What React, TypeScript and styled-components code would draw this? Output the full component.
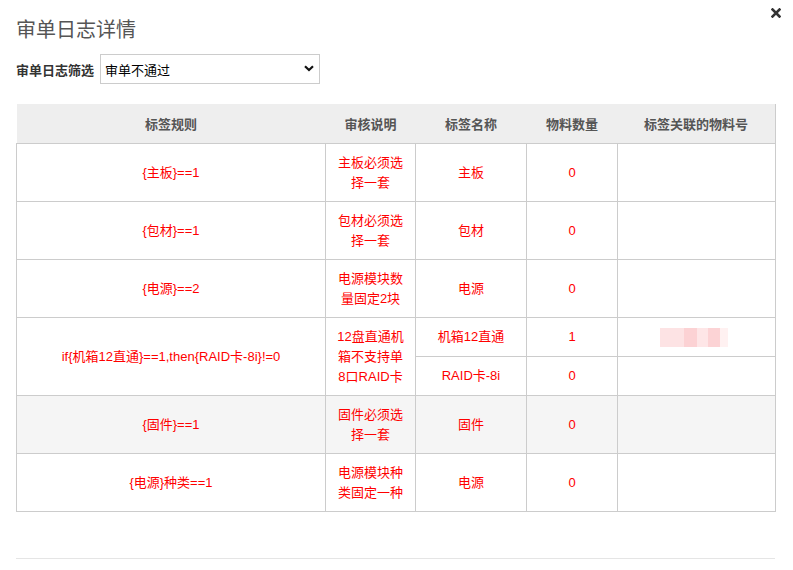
import React, { FC } from 'react';
import styled, { createGlobalStyle } from 'styled-components';

const GlobalStyle = createGlobalStyle`
  html, body {
    margin: 0;
    padding: 0;
    background: #fff;
  }
  body {
    font-family: "Liberation Sans", Arial, "Noto Sans CJK SC", sans-serif;
    font-size: 13px;
    color: #333;
  }
`;

const StyledModal = styled.div`
  position: relative;
  width: 793px;
  height: 570px;
  box-sizing: border-box;
  padding: 14px 18px 0 16px;
`;

const StyledTitle = styled.h3`
  margin: 0;
  font-size: 20px;
  font-weight: 400;
  line-height: 30px;
  color: #555;
  font-family: "Noto Sans CJK SC", sans-serif;
`;

const StyledClose = styled.button`
  position: absolute;
  top: 6px;
  right: 10px;
  width: 14px;
  height: 14px;
  padding: 0;
  border: none;
  background: none;
  cursor: pointer;
  display: flex;
  align-items: center;
  justify-content: center;
`;

const StyledFilter = styled.div`
  display: flex;
  align-items: center;
  gap: 6px;
  margin-top: 10px;
`;

const StyledLabel = styled.label`
  font-size: 13px;
  font-weight: 700;
  color: #333;
  font-family: "Noto Sans CJK SC", sans-serif;
`;

const StyledSelectWrap = styled.div`
  position: relative;
  width: 220px;
  height: 30px;
`;

const StyledSelect = styled.select`
  appearance: none;
  width: 100%;
  height: 100%;
  box-sizing: border-box;
  border: 1px solid #ccc;
  border-radius: 0;
  background: #fff;
  padding: 0 26px 0 4px;
  font-size: 13px;
  color: #000;
  font-family: "Noto Sans CJK SC", sans-serif;
  outline: none;
`;

const StyledChevron = styled.svg`
  position: absolute;
  right: 6px;
  top: 11px;
  pointer-events: none;
`;

const StyledTable = styled.table`
  margin-top: 20px;
  width: 758px;
  border-collapse: collapse;
  table-layout: fixed;
  border-right: 1px solid #ccc;
  border-bottom: 1px solid #ccc;
`;

const StyledTh = styled.th<{ $w: number }>`
  width: ${(p) => p.$w}px;
  height: 39px;
  padding: 0;
  background: #eee;
  color: #555;
  font-size: 13px;
  font-weight: 700;
  text-align: center;
  font-family: "Noto Sans CJK SC", sans-serif;
`;

const StyledRow = styled.tr<{ $shade?: boolean }>`
  background: ${(p) => (p.$shade ? '#f5f5f5' : '#fff')};
`;

const StyledTd = styled.td<{ $h?: number; $pad?: number }>`
  height: ${(p) => p.$h ?? 57}px;
  padding: 0 ${(p) => p.$pad ?? 8}px;
  border: 1px solid #ccc;
  text-align: center;
  vertical-align: middle;
  color: #f00;
  font-size: 13px;
  line-height: 20px;
  font-family: "Liberation Sans", Arial, "Noto Sans CJK SC", sans-serif;
`;

const StyledBlur = styled.div`
  width: 68px;
  height: 19px;
  margin: 0 0 0 34px;
  filter: blur(0.6px);
  background: linear-gradient(
    to right,
    #fde3e4 0,
    #fde3e4 24px,
    #fcd2d4 24px,
    #fcd2d4 37px,
    #fee6e7 37px,
    #fee6e7 48px,
    #fcd3d5 48px,
    #fcd3d5 60px,
    #fff1f1 60px
  );
`;

const StyledFooter = styled.div`
  margin-top: 46px;
  width: 759px;
  border-top: 1px solid #e5e5e5;
`;

type Rule = {
  rule: string;
  note: string;
  name: string;
  qty: number;
  shade?: boolean;
};

const rules: Rule[] = [
  { rule: '{主板}==1', note: '主板必须选择一套', name: '主板', qty: 0 },
  { rule: '{包材}==1', note: '包材必须选择一套', name: '包材', qty: 0 },
  { rule: '{电源}==2', note: '电源模块数量固定2块', name: '电源', qty: 0 },
];

const rulesAfter: Rule[] = [
  { rule: '{固件}==1', note: '固件必须选择一套', name: '固件', qty: 0, shade: true },
  { rule: '{电源}种类==1', note: '电源模块种类固定一种', name: '电源', qty: 0 },
];

const SimpleRow: FC<{ item: Rule }> = ({ item }) => (
  <StyledRow $shade={item.shade}>
    <StyledTd>{item.rule}</StyledTd>
    <StyledTd $pad={10}>{item.note}</StyledTd>
    <StyledTd>{item.name}</StyledTd>
    <StyledTd>{item.qty}</StyledTd>
    <StyledTd />
  </StyledRow>
);

const App: FC = () => (
  <>
    <GlobalStyle />
    <StyledModal>
      <StyledTitle>审单日志详情</StyledTitle>
      <StyledClose aria-label="close">
        <svg width="10" height="10" viewBox="0 0 10 10">
          <path d="M1.5 1.5 L8.5 8.5 M8.5 1.5 L1.5 8.5" stroke="#333" strokeWidth="2.6" strokeLinecap="square" />
        </svg>
      </StyledClose>

      <StyledFilter>
        <StyledLabel>审单日志筛选</StyledLabel>
        <StyledSelectWrap>
          <StyledSelect defaultValue="fail">
            <option value="all">全部</option>
            <option value="pass">审单通过</option>
            <option value="fail">审单不通过</option>
          </StyledSelect>
          <StyledChevron width="10" height="7" viewBox="0 0 10 7">
            <path d="M1 1.2 L5 5 L9 1.2" stroke="#111" strokeWidth="2.2" fill="none" />
          </StyledChevron>
        </StyledSelectWrap>
      </StyledFilter>

      <StyledTable>
        <thead>
          <tr>
            <StyledTh $w={309}>标签规则</StyledTh>
            <StyledTh $w={90}>审核说明</StyledTh>
            <StyledTh $w={111}>标签名称</StyledTh>
            <StyledTh $w={91}>物料数量</StyledTh>
            <StyledTh $w={157}>标签关联的物料号</StyledTh>
          </tr>
        </thead>
        <tbody>
          {rules.map((r) => (
            <SimpleRow key={r.rule} item={r} />
          ))}
          <StyledRow>
            <StyledTd rowSpan={2} $h={77}>
              if{'{'}机箱12直通{'}'}==1,then{'{'}RAID卡-8i{'}'}!=0
            </StyledTd>
            <StyledTd rowSpan={2} $h={77} $pad={10}>
              12盘直通机箱不支持单8口RAID卡
            </StyledTd>
            <StyledTd $h={38}>机箱12直通</StyledTd>
            <StyledTd $h={38}>1</StyledTd>
            <StyledTd $h={38} $pad={8}>
              <StyledBlur />
            </StyledTd>
          </StyledRow>
          <StyledRow>
            <StyledTd $h={38}>RAID卡-8i</StyledTd>
            <StyledTd $h={38}>0</StyledTd>
            <StyledTd $h={38} />
          </StyledRow>
          {rulesAfter.map((r) => (
            <SimpleRow key={r.rule} item={r} />
          ))}
        </tbody>
      </StyledTable>

      <StyledFooter />
    </StyledModal>
  </>
);

export default App;
